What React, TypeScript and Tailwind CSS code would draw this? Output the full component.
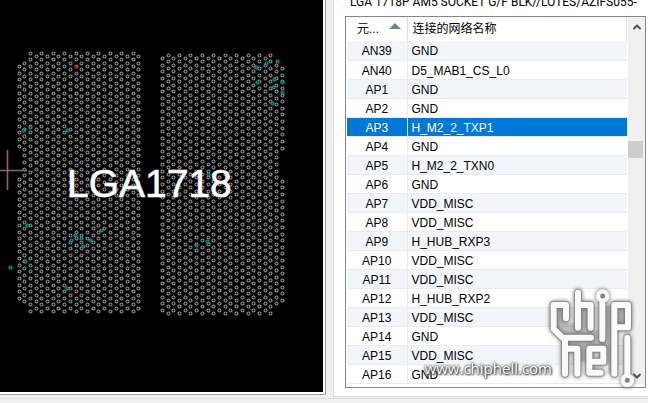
import { ChevronDown, ChevronUp } from "lucide-react";

const PITCH_X = 5.714;
const PITCH_Y = 6.623;

type Dot = [number, number];

const NETS: [string, string][] = [
  ["AN39", "GND"],
  ["AN40", "D5_MAB1_CS_L0"],
  ["AP1", "GND"],
  ["AP2", "GND"],
  ["AP3", "H_M2_2_TXP1"],
  ["AP4", "GND"],
  ["AP5", "H_M2_2_TXN0"],
  ["AP6", "GND"],
  ["AP7", "VDD_MISC"],
  ["AP8", "VDD_MISC"],
  ["AP9", "H_HUB_RXP3"],
  ["AP10", "VDD_MISC"],
  ["AP11", "VDD_MISC"],
  ["AP12", "H_HUB_RXP2"],
  ["AP13", "VDD_MISC"],
  ["AP14", "GND"],
  ["AP15", "VDD_MISC"],
  ["AP16", "GND"],
];

const SELECTED = "AP3";

const VIAS: Dot[] = [
  [23.7, 130.7], [30.7, 127], [67.3, 130.7],
  [256, 67.3], [266.7, 63.7], [277.3, 61], [257.3, 82.3], [274, 79.7],
  [273.3, 87], [282.3, 82.3], [282.3, 92.3], [272, 103.7], [208.7, 174.7],
  [27.3, 225.3], [71, 240.7], [75.7, 235.7], [81.7, 238.7], [90.3, 240],
  [101.3, 230], [83.3, 246.7], [25.3, 261.3], [10, 267.7], [67.3, 288],
  [196.3, 245.7], [207.7, 241.7],
];

// One half of the socket. `edge` is the outer column, which has the notch.
function pinBlock(x0: number, y0: number, side: "left" | "right"): Dot[] {
  const pins: Dot[] = [];
  for (let col = 0; col < 22; col++) {
    const edge = side === "left" ? col : 21 - col;
    const odd = edge % 2 === 1;
    let first = 0;
    let last = odd ? 38 : 39;
    if (edge === 0) [first, last] = [2, 37];
    if (edge === 1) [first, last] = [1, 37];
    for (let n = first; n <= last; n++) {
      if (edge === 0 && n > 14 && n < 19) continue;
      pins.push([x0 + col * PITCH_X, y0 + (n + (odd ? 0.5 : 0)) * PITCH_Y]);
    }
  }
  return pins;
}

const PINS = [...pinBlock(19, 53.3, "left"), ...pinBlock(162.3, 55.3, "right")];

function Board() {
  return (
    <svg viewBox="0 0 323 392" className="block h-auto w-full bg-black" role="img" aria-label="LGA1718">
      <g fill="none" stroke="#929292" strokeWidth="1.1">
        {PINS.map(([x, y], i) => (
          <circle key={i} cx={Math.floor(x) + 0.5} cy={Math.floor(y) + 0.5} r="1.5" />
        ))}
      </g>
      <text
        x="67"
        y="197"
        fill="#ffffff"
        stroke="#ffffff"
        strokeWidth="0.6"
        fontSize="39"
        fontFamily="Liberation Sans, Arial, sans-serif"
      >
        LGA1718
      </text>
      <g fill="#004848" stroke="#009a9a" strokeWidth="1.2">
        {VIAS.map(([x, y], i) => (
          <circle key={i} cx={Math.floor(x) + 0.5} cy={Math.floor(y) + 0.5} r="1.5" />
        ))}
      </g>
      <circle cx="76.3" cy="66.5" r="1.6" fill="#ff0000" />
      <path d="M0 170.5H27M7.5 150V190" stroke="#8a656a" strokeWidth="1.6" fill="none" />
    </svg>
  );
}

function NetTable() {
  return (
    <table className="mr-px flex-1 table-fixed border-collapse self-start text-xs text-black">
      <thead>
        <tr className="h-6">
          <th className="w-[60px] border-r border-[#dedede] p-0 font-normal" aria-sort="ascending">
            <div className="flex items-start justify-between pr-1.5 pl-2.5">
              <span>元...</span>
              <svg viewBox="0 0 12 6" className="mt-0.5 h-1.5 w-3 fill-[#718096]">
                <path d="M0 6L6 0L12 6Z" />
              </svg>
            </div>
          </th>
          <th className="border-r border-[#dedede] p-0 pl-[5px] text-left font-normal">连接的网络名称</th>
        </tr>
      </thead>
      <tbody>
        {NETS.map(([pin, net]) => (
          <tr
            key={pin}
            aria-selected={pin === SELECTED}
            className="h-[19px] border-b border-[#ebebeb] leading-4 odd:bg-[#f2f6fb] aria-selected:bg-[#0078d7] aria-selected:text-white"
          >
            <td className="border-r border-[#ebebeb] p-0 pt-0.5 text-center">{pin}</td>
            <td className="p-0 pt-0.5 pl-1">{net}</td>
          </tr>
        ))}
      </tbody>
    </table>
  );
}

function ScrollBar() {
  return (
    <div className="flex w-[17px] flex-col items-center bg-[#f0f0f0] text-[#505050]">
      <button type="button" aria-label="Scroll up" className="flex h-5 items-center">
        <ChevronUp size={12} strokeWidth={4} />
      </button>
      <div className="flex w-full flex-1 flex-col">
        <div className="h-[104px]" />
        <div className="mr-0.5 h-[17px] bg-[#cdcdcd]" />
      </div>
      <button type="button" aria-label="Scroll down" className="flex h-4 items-center">
        <ChevronDown size={12} strokeWidth={4} />
      </button>
    </div>
  );
}

function ChipLogo() {
  return (
    <svg
      viewBox="0 0 324 369"
      className="h-[123px] w-[108px] drop-shadow-[0_0_2px_#555555]"
      aria-hidden="true"
    >
      <path
        d="M41 75H78V130H105V75H152V150H187V75H264V142H232V281H205V206H148V245H112V206H75V180L41 147Z"
        fill="#777777"
        opacity="0.25"
      />
      <g fill="none" strokeLinecap="round" strokeLinejoin="round">
        <g stroke="#808080" strokeWidth="24" opacity="0.6">
          <path d="M78 115V75H41V147L75 180V281M75 173H153M114 38V143M114 75H152V143M187 68V177" />
          <path d="M223 281V75H264V142H227M75 206H112V281M182 278H148V206H190V245H150M262 173V283" />
        </g>
        <g stroke="#fafafa" strokeWidth="18">
          <path d="M78 115V75H41V147L75 180V281M75 173H153M114 38V143M114 75H152V143M187 68V177" />
          <path d="M223 281V75H264V142H227M75 206H112V281M182 278H148V206H190V245H150M262 173V283" />
        </g>
      </g>
      <g fill="#858585" stroke="#fafafa" strokeWidth="13">
        <circle cx="188" cy="48" r="14" />
        <circle cx="262" cy="301" r="14" />
      </g>
    </svg>
  );
}

export default function App() {
  return (
    <div className="relative min-h-screen overflow-hidden bg-[#f0f0f0] font-['Liberation_Sans','Noto_Sans_CJK_SC',sans-serif]">
      <div className="flex">
        <main className="flex-1 self-start border-r border-b border-[#a0a0a0] bg-white pr-0.5 pb-0.5">
          <Board />
        </main>
        <aside className="ml-[7px] flex w-[315px] flex-col border-b border-l border-[#dcdcdc] bg-white">
          <div className="flex h-2 items-end overflow-hidden pl-4 font-['Roboto',sans-serif] text-xs leading-3 whitespace-nowrap text-black">
            LGA 1718P AM5 SOCKET G/F BLK//LOTES/AZIFS055-
          </div>
          <section className="mt-2 mr-0.5 mb-2 ml-[11px] flex border border-[#828790] pb-[3px] pl-px">
            <NetTable />
            <ScrollBar />
          </section>
        </aside>
      </div>
      <div className="mt-px border-t border-[#dcdcdc]" />
      <div className="pointer-events-none absolute top-[280px] right-0 flex">
        <span className="mt-[76px] mr-[-12px] font-['Open_Sans',sans-serif] text-[15px] leading-6 font-medium text-white [text-shadow:0_0_2px_#333,0_0_3px_#444,1px_1px_2px_#333]">
          www.chiphell.com
        </span>
        <ChipLogo />
      </div>
    </div>
  );
}
